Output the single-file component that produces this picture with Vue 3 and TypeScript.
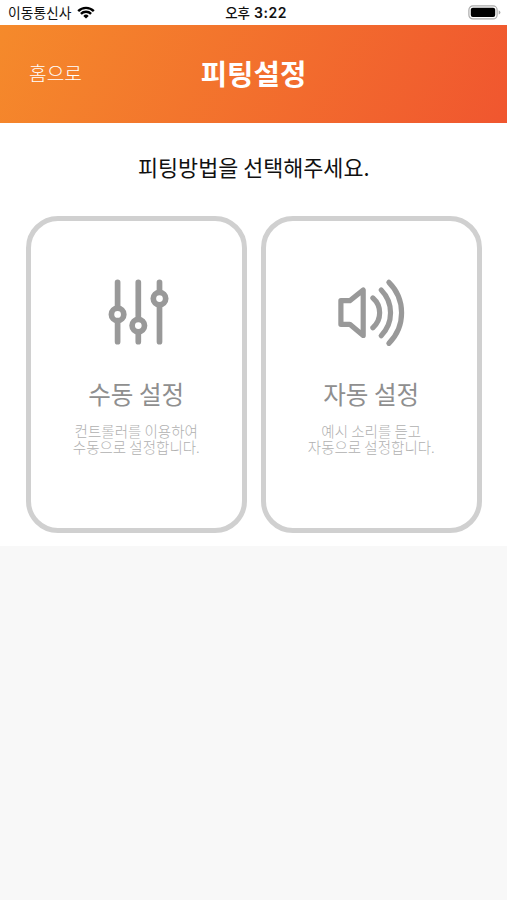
<script setup lang="ts">
interface FittingMethod {
  id: 'manual' | 'auto'
  title: string
  lines: string[]
}

const methods: FittingMethod[] = [
  { id: 'manual', title: '수동 설정', lines: ['컨트롤러를 이용하여', '수동으로 설정합니다.'] },
  { id: 'auto', title: '자동 설정', lines: ['예시 소리를 듣고', '자동으로 설정합니다.'] },
]
</script>

<template>
  <div class="screen">
    <div class="status">
      <div class="carrier">
        <span>이동통신사</span>
        <svg class="wifi" viewBox="0 0 18 13" width="18" height="13">
          <path d="M1.2 5.1 A11 11 0 0 1 16.8 5.1" />
          <path d="M3.9 7.9 A7.2 7.2 0 0 1 14.1 7.9" />
          <path class="dot" d="M9 12.6 L6.3 9.9 A3.9 3.9 0 0 1 11.7 9.9 Z" />
        </svg>
      </div>
      <div class="time">오후 <span class="digits">3:22</span></div>
      <svg class="battery" viewBox="0 0 33 15" width="33" height="15">
        <rect x="0.9" y="0.9" width="28.2" height="13" rx="4" class="shell" />
        <rect x="2.8" y="2.8" width="24.4" height="9.2" rx="2" />
        <path class="tip" d="M30.7 5.2 Q32.4 6 32.4 7.4 Q32.4 8.8 30.7 9.6 Z" />
      </svg>
    </div>
    <header class="header">
      <button class="home">홈으로</button>
      <h1 class="title">피팅설정</h1>
    </header>
    <main class="panel">
      <p class="question">피팅방법을 선택해주세요.</p>
      <div class="cards">
        <button v-for="m in methods" :key="m.id" class="card">
          <svg v-if="m.id === 'manual'" class="icon" viewBox="0 0 85 85">
            <path d="M23.6 12.3V37.5M23.6 51V71.7M44.3 12.3V48.5M44.3 62V71.7M65.5 12.3V21.5M65.5 35V71.7" />
            <circle cx="23.6" cy="44.4" r="6.2" />
            <circle cx="44.3" cy="55.6" r="6.2" />
            <circle cx="65.5" cy="28.6" r="6.2" />
          </svg>
          <svg v-else class="icon sound" viewBox="0 0 85 85">
            <path d="M11.9 30.7H20.8L34.2 20V65.5L20.8 54.3H11.9Z" />
            <path d="M43.9 28A19.7 19.7 0 0 1 43.9 57.7" />
            <path d="M52.2 20A32.6 32.6 0 0 1 52.2 65.7" />
            <path d="M59.9 12.3A43 43 0 0 1 59.9 73.3" />
          </svg>
          <span class="name">{{ m.title }}</span>
          <span class="desc">{{ m.lines.join('\n') }}</span>
        </button>
      </div>
    </main>
  </div>
</template>

<style>
body {
  background: #f8f8f8;
}
</style>

<style scoped>
.screen {
  min-height: 900px;
  background: #f8f8f8;
  font-family: "Noto Sans CJK KR", "Noto Sans", sans-serif;
  color: #111;
}

button {
  margin: 0;
  padding: 0;
  border: 0;
  background: none;
  font-family: inherit;
  color: inherit;
}

.status {
  display: grid;
  grid-template-columns: 1fr auto 1fr;
  align-items: center;
  height: 25px;
  padding: 0 6px 0 8px;
  box-sizing: border-box;
  background: #fff;
}

.carrier {
  display: flex;
  align-items: center;
  gap: 6px;
  font-size: 13.8px;
  line-height: 25px;
}

.wifi path {
  fill: none;
  stroke: #000;
  stroke-width: 2.4;
}

.wifi .dot {
  fill: #000;
  stroke: none;
}

.time {
  padding-left: 3px;
  font-size: 13.5px;
  line-height: 25px;
  font-weight: 500;
}

.digits {
  margin-left: 1px;
  font-family: Inter, sans-serif;
  font-size: 14px;
  font-weight: 600;
  letter-spacing: 0.5px;
}

.battery {
  justify-self: end;
}

.battery .shell {
  fill: none;
  stroke: #aaa;
  stroke-width: 1.2;
}

.battery .tip {
  fill: #aaa;
}

.header {
  display: grid;
  grid-template-columns: 1fr auto 1fr;
  align-items: center;
  height: 98px;
  padding: 0 29px 2px;
  box-sizing: border-box;
  background: linear-gradient(116deg, #f58a2b 0%, #f0562f 100%);
  color: #fff;
}

.home {
  justify-self: start;
  font-size: 19.2px;
  font-weight: 300;
  line-height: 28px;
}

.title {
  margin: 0;
  font-size: 28.7px;
  font-weight: 700;
  line-height: 40px;
}

.panel {
  height: 423px;
  box-sizing: border-box;
  padding: 28px 25px 0 25.5px;
  background: #fff;
}

.question {
  margin: 0;
  font-size: 21.8px;
  line-height: 32px;
  text-align: center;
}

.cards {
  display: grid;
  grid-template-columns: 221.5px 221.5px;
  gap: 13.5px;
  margin-top: 33px;
}

.card {
  display: flex;
  flex-direction: column;
  align-items: center;
  justify-content: flex-start;
  height: 317px;
  box-sizing: border-box;
  padding-top: 49px;
  border: 5px solid #d0d0d0;
  border-radius: 32px;
}

.icon {
  width: 85px;
  height: 85px;
  fill: none;
  stroke: #999;
  stroke-width: 5.7;
  stroke-linecap: round;
  stroke-linejoin: round;
}

.sound {
  stroke-width: 5.2;
}

.name {
  margin-top: 20px;
  font-size: 24.6px;
  line-height: 36px;
  font-weight: 400;
  color: #8f8f8f;
}

.desc {
  margin-top: 12px;
  font-size: 14.5px;
  line-height: 16px;
  font-weight: 300;
  color: #b0b0b0;
  white-space: pre-line;
}
</style>
